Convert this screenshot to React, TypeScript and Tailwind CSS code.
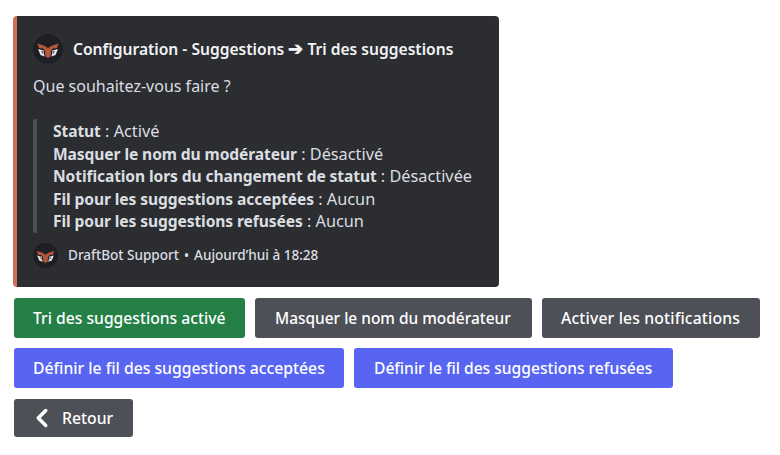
import { ChevronLeft } from "lucide-react";

function Logo({ size }: { size: number }) {
  return (
    <svg width={size} height={size} viewBox="0 0 30 30" className="shrink-0">
      <circle cx="15" cy="15" r="15" fill="#1e1f22" />
      <path d="M4.5 9.5 L11 11.5 L15 14 L19 11.5 L25.5 9.5 L24 14 L20 14.5 L18 17 L17.5 22.5 L15 24 L12.5 22.5 L12 17 L10 14.5 L6 14 Z" fill="#b5563c" />
      <path d="M5 15 L10.5 16.5 L11.5 22.5 L7.5 21 Z M25 15 L19.5 16.5 L18.5 22.5 L22.5 21 Z" fill="#e6e6e6" />
      <path d="M8 17 L10 17.8 L10.4 20.5 Z M22 17 L20 17.8 L19.6 20.5 Z" fill="#1e1f22" />
    </svg>
  );
}

function Field({ label, value }: { label: string; value: string }) {
  return (
    <div className="whitespace-nowrap">
      <span className="text-[15.6px] font-bold tracking-[-0.1px] text-[#dbdee1]">{label}</span> : {value}
    </div>
  );
}

function Btn({ className, children }: { className: string; children: React.ReactNode }) {
  return (
    <button className={`flex h-10 items-center rounded-[3px] pt-[2px] font-medium text-white ${className}`}>
      {children}
    </button>
  );
}

export default function App() {
  return (
    <div className="h-[455px] w-[780px] overflow-hidden bg-white pl-[13px] pt-4 font-['Noto_Sans',sans-serif]">
      <div className="h-[271px] w-[486px] rounded-[4px] border-l-4 border-[#cd6f5a] bg-[#2b2d31] pl-4 pt-[18px]">
        <div className="flex items-center gap-[10px] pb-[7px]">
          <Logo size={30} />
          <div className="whitespace-nowrap pt-[2px] text-[15.6px] font-semibold text-[#f2f3f5]">
            Configuration - Suggestions <span className="text-[18px] leading-none">➔</span> Tri des suggestions
          </div>
        </div>
        <div className="mt-[3px] pt-px text-[16px] leading-[22px] text-[#dbdee1]">Que souhaitez-vous faire ?</div>
        <div className="mt-[22px] rounded-[2px] border-l-4 border-[#4e5058] pl-4 pt-px text-[16.3px] leading-[22.5px] text-[#dbdee1]">
          <Field label="Statut" value="Activé" />
          <Field label="Masquer le nom du modérateur" value="Désactivé" />
          <Field label="Notification lors du changement de statut" value="Désactivée" />
          <Field label="Fil pour les suggestions acceptées" value="Aucun" />
          <Field label="Fil pour les suggestions refusées" value="Aucun" />
        </div>
        <div className="mt-[10px] flex items-center gap-[10px]">
          <Logo size={25} />
          <div className="whitespace-nowrap text-[13.55px] font-medium text-[#dbdee1]">
            DraftBot Support<span className="mx-[5px]">•</span>Aujourd’hui à 18:28
          </div>
        </div>
      </div>
      <div className="mt-[11px] flex flex-col pl-px">
        <div className="flex gap-[10px]">
          <Btn className="w-[231px] bg-[#248046] pl-[19px] text-[15.7px]">Tri des suggestions activé</Btn>
          <Btn className="w-[277px] bg-[#4e5058] pl-5 text-[15.45px]">Masquer le nom du modérateur</Btn>
          <Btn className="w-[218px] bg-[#4e5058] pl-[19px] text-[15.75px] tracking-[0.15px]">Activer les notifications</Btn>
        </div>
        <div className="mt-[10px] flex gap-[10px]">
          <Btn className="w-[330px] bg-[#5865f2] pl-[19px] text-[15.75px]">Définir le fil des suggestions acceptées</Btn>
          <Btn className="w-[319px] bg-[#5865f2] pl-5 text-[15.6px]">Définir le fil des suggestions refusées</Btn>
        </div>
        <Btn className="mt-[11px] h-[38px] w-[119px] gap-[5px] bg-[#4e5058] pl-[14px] text-[15.75px]">
          <ChevronLeft size={30} strokeWidth={2.8} className="-mt-[2px] -ml-px shrink-0" />
          Retour
        </Btn>
      </div>
    </div>
  );
}
